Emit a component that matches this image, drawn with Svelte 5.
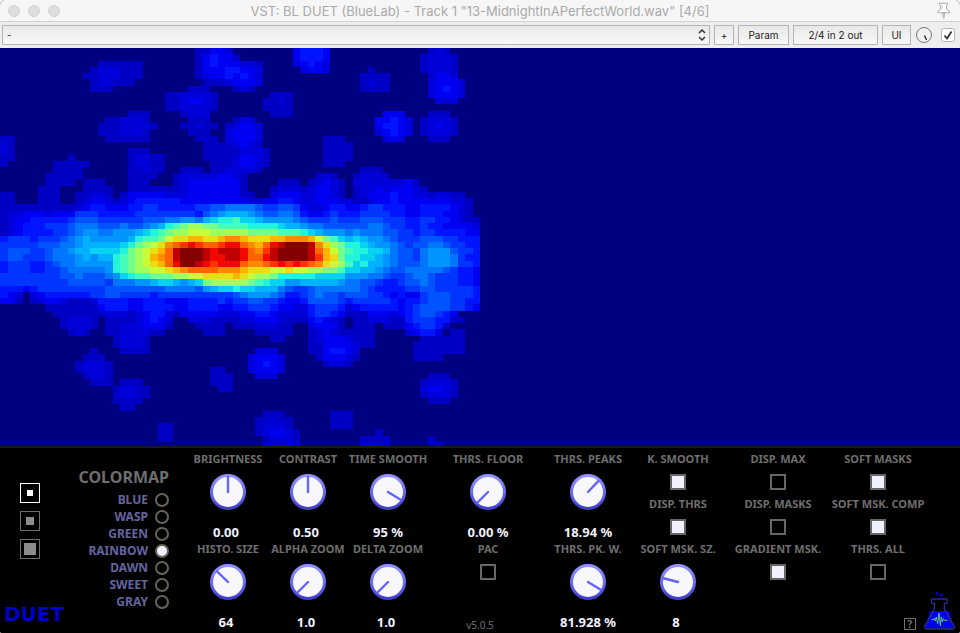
<script>
  // Colour ramp of the "rainbow" map, from quietest to loudest.
  const ramp = {
    a: '#0000c4', b: '#0000da', c: '#0000f2', d: '#0014ff', e: '#0034ff',
    f: '#0054ff', g: '#0076ff', h: '#0094ff', i: '#00b2ff', j: '#08d2f2',
    k: '#22f4dc', l: '#44ffba', m: '#74ff8c', n: '#a0ff5c', o: '#c8ff36',
    p: '#ecdc14', q: '#ffb400', r: '#ff8a00', s: '#ff6200', t: '#ff3400',
    u: '#f20800', v: '#c00000', w: '#840000'
  };

  // Histogram cells, one line per bin row: left 32 bins, right 32 bins.
  const bins = [
    ['..........................aaccb.', '.......cdddc.............aba....'],
    ['..........................acdcca', '.......cdddc............abbba...'],
    ['.............aaaaaa.......acdccc', 'bba....bcdcb............abbba...'],
    ['............abbbaaa.......acccdd', 'ccb.....bccb.....a......abbba...'],
    ['...........aabbbaaa.......abccdc', 'dcb.............aaaa.....accb...'],
    ['............abbaaa.........aaabc', 'ccb.............abaa.....bcccb..'],
    ['............aaa..........aaa...a', 'ba..............aaaa.....bcdcb..'],
    ['......................aabbbba...', '....aaa..................bcccb..'],
    ['......................aabccba...', '...aaba...................bbb...'],
    ['......................aabbbba...', '...aaaa.........................'],
    ['.................aaa....abbb....', '....aaa............ccc...aaa....'],
    ['..............aabbba.....aaa...a', 'bb................ccdcb.abbba...'],
    ['.............aaabbbba...aabaa.ab', 'ccb...............cddcb.abcba...'],
    ['.............aaabbba.....aaa..bc', 'ccb...............bcdcb.abbba...'],
    ['aa............aaaaaa......aaa.bc', 'ccb........aaa.....bcb...aaa....'],
    ['ba.........................aaaab', 'cba........aaaa.................'],
    ['ba...............aaa.......aaaaa', 'bbba.......aaaa.................'],
    ['aa.......a.......abbaa.....aaaab', 'ccba.......aaaa.................'],
    ['a......aaaaa.....abbaa......aaab', 'ccba.......aaa..................'],
    ['.......aaaa......aabaa..aaa.aabb', 'bba.............aaa.............'],
    ['......aaaaa......aaaa..abbbbbccb', 'a.........aba..abbba............'],
    ['......aaaa.aaa...aaa...abccccccc', 'a....aaa.abcba.bbbbbbbca........'],
    ['.....aaa...aaaa..aaaaaaabccccccc', 'a...abbbabccba.abbcbcccba.......'],
    ['aa...aaa..aabba.acccccbbbccccccc', 'aa..bcccbbccba.abcccdccbbabbaa..'],
    ['aa...aaa..abccbabcddddddcccccccc', 'cbbccddcbbcccbbaabccdcccccccbba.'],
    ['aaaaaaaaaabcddcccddeedddddeeffgg', 'ggfeeffecbbcddccdeedddccddddcba.'],
    ['abbcccbccceeedddddeeeeeeeedfghii', 'ihgffggfdccdedddeeeeddccdddccba.'],
    ['abccdddddefffeeeeeefffgghhgijkkl', 'jjihhhhgfeeefeeefffeeeddeeddcbaa'],
    ['abcdddeeefgggfffgffghiklmnnmmlll', 'lkkkkjiihggffffffggfeeddeddccccb'],
    ['abcddddeefghhgghhhijklmnnooonnnn', 'nmmmmlllkjihhhghgggffeedeeddddcc'],
    ['deeedeeefghihhhhhikllmoppqqppqrr', 'qpppqqrrrqomljijihhgfeeefffeeddd'],
    ['eeeeefffgghiiiiijkmnoprstutsstuu', 'srqsuvwwwvrpnmkkjihhgfeffggfeedd'],
    ['efffeefgghiijjjjkmnopqsvwwwvuvvv', 'usrtvwwwwvsqomlkkjjigffeghhhfeed'],
    ['effeeefggghihiiklmnoqrsvwwwvuuvv', 'ussuvwwwwvtqpmkkjjihgffeghhhgedd'],
    ['deeeddefgghhhhhklmnopqsuwwvutuuu', 'srrstututsrponljkiihgfffghhhgeed'],
    ['deeeddeefggggghklmnnoopqrssssrrr', 'qpppoopoonnmmljjiihgffgggggfeddc'],
    ['eeeeeeeeffgfffghjkllmmmnnooppppq', 'ponnmkkkkkjjjjhhhggfeefggfeeeddc'],
    ['eeeeeeeeefffffeggghhijjihijmnnnn', 'nmlkjjhhiiiiihggffeddeffgfeeeddc'],
    ['dddcdeeeeeeeeeffffffffggggfhijjk', 'jjiiigfeefggggggfeddddeeffeeeeed'],
    ['dcb.bcddddddeeffeeeedeeeeeeeeeef', 'ghhhgfddefgffefffeedcdccefffeeed'],
    ['cca.abccbaaabddddccdddcccddddede', 'effeedccdffffedeeeeedcddefffeedd'],
    ['......aaaaaaacdddccddddccddddccd', 'deeedccbbdeeedbcdddddcdeffffeedc'],
    ['.......aaaaaaabbbabcddbacccccbbb', 'ccddcbbbbdeedcaaacccbcdeffedc...'],
    ['........abbba.aaaabcdcb..bbbaaaa', 'bbcccbaaacdcba.aabbbaadeeeddaa..'],
    ['........abbba.aabbbccca...aaaa.a', 'aabbbaa..bccca.aaa.aaacdeeda....'],
    ['.........aba..aabbbbaa.....aaa..', '..aaaaa..abcbaaaaa....bcddb.aa..'],
    ['...............abbba............', '....aa...abcccbaaa......aaaaaa..'],
    ['...............abbba............', '.........aaccccbaa.....aaaaaaa..'],
    ['............a...aaaa............', '..bbb....aacddcb.......aaaaaaa..'],
    ['...........aaa..................', '.bcccb....acccba.......aaaa.....'],
    ['..........abbba.................', '.bcdcb.....abba.................'],
    ['..........abbba.............aa..', '.bcccb..........................'],
    ['...........abba.............aaa.', '..bbb....................aaa....'],
    ['............aaa.aaa.........aaa.', '........................abbba...'],
    ['...............abbaa.........aa.', '........................bccba...'],
    ['...............abbaa............', '........................abbba...'],
    ['...............aaaa.............', '.........................aaa....'],
    ['................aa..............', '................................'],
    ['................................', '...aaa......aaa.................'],
    ['................................', '..aabaa.....aaa.................'],
    ['.....................aa.........', '..abbba.....aaa.................'],
    ['.....................aa.........', '..abccba..........a.............'],
    ['.....................aa.........', '...abbba........aaaa.....a......'],
    ['................................', '...abbba........abba.....aa.....']
  ];

  // Merge neighbouring cells of one level into a single bar.
  const cells = bins.flatMap(([left, right], y) => {
    const line = left + right;
    return [...line.matchAll(/([a-w])\1*/g)].map((m) => ({
      x: m.index, y, w: m[0].length, fill: ramp[m[1]]
    }));
  });

  const knob = (label, turn, text, unit = '') => ({ kind: 'knob', label, turn, text, unit });
  const toggle = (label, on = false) => ({ label, on });
  const toggles = (...items) => ({ kind: 'toggles', items });

  let controls = $state([
    knob('BRIGHTNESS', 50, '0.00'),
    knob('CONTRAST', 50, '0.50'),
    knob('TIME SMOOTH', 95, '95', '%'),
    knob('THRS. FLOOR', 0, '0.00', '%'),
    knob('THRS. PEAKS', 66, '18.94', '%'),
    toggles(toggle('K. SMOOTH', true), toggle('DISP. THRS', true)),
    toggles(toggle('DISP. MAX'), toggle('DISP. MASKS')),
    toggles(toggle('SOFT MASKS', true), toggle('SOFT MSK. COMP', true)),
    knob('HISTO. SIZE', 33, '64'),
    knob('ALPHA ZOOM', 0, '1.0'),
    knob('DELTA ZOOM', 0, '1.0'),
    { ...toggles(toggle('PAC')), note: 'v5.0.5' },
    knob('THRS. PK. W.', 95, '81.928', '%'),
    knob('SOFT MSK. SZ.', 22, '8'),
    toggles(toggle('GRADIENT MSK.', true)),
    toggles(toggle('THRS. ALL'))
  ]);

  const maps = ['BLUE', 'WASP', 'GREEN', 'RAINBOW', 'DAWN', 'SWEET', 'GRAY'];
  let colormap = $state('RAINBOW');

  const sizes = [
    { name: 'Small', dot: 6 },
    { name: 'Medium', dot: 8 },
    { name: 'Large', dot: 12 }
  ];
  let size = $state('Small');
  let enabled = $state(true);
</script>

<div class="window">
  <header class="titlebar">
    <span class="lights"><i></i><i></i><i></i></span>
    <h1>VST: BL DUET (BlueLab) - Track 1 "13-MidnightInAPerfectWorld.wav" [4/6]</h1>
    <button class="pin" aria-label="Pin window">
      <svg viewBox="888 6 44 52" width="15" height="17">
        <path d="M897 10h26v4l-4 2v12l9 6v5h-35v-5l8-6V16l-4-2z M908 39h5l-1 14-1.500 3-1.500-3z" fill="#fff" stroke="#999" stroke-width="2.500" />
        <path d="M906 16v13" stroke="#bbb" stroke-width="2.500" />
      </svg>
    </button>
  </header>

  <div class="toolbar">
    <div class="preset">
      <select aria-label="Preset"><option>-</option></select>
      <svg viewBox="0 0 10 14" width="10" height="14">
        <path d="M2 5l3-3 3 3M2 9l3 3 3-3" fill="none" stroke="#333" stroke-width="1.500" />
      </svg>
    </div>
    <button class="add">+</button>
    <button class="param">Param</button>
    <button class="routing">2/4 in 2 out</button>
    <button class="ui">UI</button>
    <button class="mix" aria-label="Wet mix">
      <svg viewBox="0 0 18 18" width="18" height="18">
        <circle cx="9" cy="9" r="7.500" fill="#f1f1f1" stroke="#777" />
        <path d="M9.500 9.500l2 4.500" stroke="#222" stroke-width="1.300" />
      </svg>
    </button>
    <label class="enable">
      <input type="checkbox" bind:checked={enabled} aria-label="Enable plug-in" />
      <svg viewBox="0 0 14 14" width="14" height="14">
        <rect x=".5" y=".5" width="13" height="13" rx="2" fill="#fff" stroke="#b4b4b4" />
        {#if enabled}<path d="M3.500 7.500l2.500 3 4.500-7" fill="none" stroke="#333" stroke-width="1.800" />{/if}
      </svg>
    </label>
  </div>

  <svg class="histogram" viewBox="0 0 128 63.68" preserveAspectRatio="none" shape-rendering="crispEdges" role="img" aria-label="Histogram">
    {#each cells as c}
      <rect x={c.x} y={c.y} width={c.w} height="1" fill={c.fill} />
    {/each}
  </svg>

  <main class="panel">
    <aside class="side">
      <div class="left">
        <div class="sizes">
          {#each sizes as s}
            <button aria-label={s.name} class:active={size === s.name} onclick={() => (size = s.name)}>
              <i style:width="{s.dot}px" style:height="{s.dot}px"></i>
            </button>
          {/each}
        </div>
        <strong class="logo">DUET</strong>
      </div>
      <fieldset class="maps">
        <legend>COLORMAP</legend>
        {#each maps as m}
          <label>{m}<input type="radio" name="colormap" value={m} bind:group={colormap} /></label>
        {/each}
      </fieldset>
    </aside>

    <section class="controls">
      {#each controls as c}
        <div class="cell">
          {#if c.kind === 'knob'}
            <label class="knob">
              <span>{c.label}</span>
              <div class="dial">
                <svg viewBox="0 0 36 36" width="36" height="36">
                  <defs>
                    <linearGradient id="ring" x1="0" y1="0" x2="0" y2="1">
                      <stop offset="0" stop-color="#9696ff" />
                      <stop offset="0.500" stop-color="#6c6cf4" />
                      <stop offset="1" stop-color="#3a3acc" />
                    </linearGradient>
                  </defs>
                  <circle cx="18" cy="18" r="18" fill="url(#ring)" />
                  <circle cx="18" cy="18" r="15" fill="#f8f8fa" />
                  <path d="M18 18V3" stroke="#6464ff" stroke-width="2.400" stroke-linecap="round" transform="rotate({c.turn * 2.7 - 135} 18 18)" />
                </svg>
                <input type="range" min="0" max="100" bind:value={c.turn} />
              </div>
            </label>
            <output class:bare={!c.unit}>{c.text}{c.unit ? ` ${c.unit}` : ''}</output>
          {:else}
            {#each c.items as t}
              <label class="toggle"><span>{t.label}</span><input type="checkbox" bind:checked={t.on} /></label>
            {/each}
            {#if c.note}<small>{c.note}</small>{/if}
          {/if}
        </div>
      {/each}
      <footer class="brand">
        <button class="help">?</button>
        <svg viewBox="672 438 93 117" width="31" height="39" role="img" aria-label="BlueLab">
          <circle cx="711" cy="445" r="4" fill="#0000d8" />
          <circle cx="724" cy="451" r="5" fill="#0000d8" />
          <path d="M690 499h57l14 46q1 4-4 4h-77q-5 0-3-5z" fill="#0000f0" />
          <path d="M703 475l-6 0q-3-1-3-6 0-7 4-7h40q4 0 4 7 0 5-3 6h-6v18l29 50q3 9-5 9h-77q-8 0-5-9l28-50z" fill="none" stroke="#2c2c96" stroke-width="4" />
          <path d="M694 524h7l2-4 3 8 3-12 4 20 4-32 4 38 3-26 3 15 3-10 3 5h9" fill="none" stroke="#5cc87c" stroke-width="3" />
        </svg>
      </footer>
    </section>
  </main>
</div>

<style>
  :global(body) {
    margin: 0;
    background: #fff;
  }

  * {
    box-sizing: border-box;
  }

  button {
    padding: 0;
    border: 0;
    background: none;
    font: inherit;
    color: inherit;
  }

  .window {
    overflow: hidden;
    border-radius: 5px 5px 2px 2px;
    background: #000;
    font-family: Inter, "Liberation Sans", sans-serif;
  }

  .titlebar {
    display: grid;
    grid-template-columns: 60px 1fr 60px;
    align-items: center;
    height: 22px;
    border-bottom: 1px solid #d0d0d0;
    background: #f6f6f6;
  }

  .titlebar h1 {
    margin: 0;
    color: #aaa;
    font-size: 13px;
    font-weight: 400;
    line-height: 20px;
    text-align: center;
    white-space: nowrap;
  }

  .lights {
    display: flex;
    gap: 8px;
    padding-left: 8px;
  }

  .lights i {
    width: 12px;
    height: 12px;
    flex: none;
    border: 1px solid #d0d0d0;
    border-radius: 50%;
    background: #dedede;
  }

  .pin {
    justify-self: end;
    display: flex;
    padding-right: 9px;
  }

  .toolbar {
    display: flex;
    align-items: center;
    gap: 4px;
    height: 26px;
    padding: 0 5px 0 2px;
    background: #eee;
    color: #222;
    font-size: 10px;
  }

  .toolbar .add,
  .toolbar .param,
  .toolbar .routing,
  .toolbar .ui,
  .preset select {
    height: 20px;
    border: 1px solid #b4b4b4;
    border-radius: 0;
    background: linear-gradient(#e8e8e8, #f8f8f8);
  }

  .toolbar button {
    flex: none;
  }

  .add {
    width: 20px;
  }

  .param {
    width: 51px;
  }

  .routing {
    width: 85px;
  }

  .ui {
    width: 29px;
  }

  .mix {
    display: flex;
  }

  .preset {
    position: relative;
    flex: 1;
    display: flex;
  }

  .preset select {
    width: 100%;
    padding: 0 4px;
    appearance: none;
    color: #333;
    font: inherit;
  }

  .preset svg {
    position: absolute;
    right: 3px;
    top: 3px;
    pointer-events: none;
  }

  .enable {
    position: relative;
    display: flex;
    margin-left: 4px;
  }

  .enable input,
  .dial input {
    position: absolute;
    inset: 0;
    width: 100%;
    height: 100%;
    margin: 0;
    opacity: 0;
  }

  .histogram {
    display: block;
    width: 100%;
    height: 398px;
    background: #000080;
  }

  .panel {
    display: grid;
    grid-template-columns: 188px 1fr;
    min-height: 187px;
    border-top: 2px solid #1a1a1a;
    background: #000;
    color: #6e6e6e;
    font: 700 11px/14px "Noto Sans", "Open Sans", sans-serif;
  }

  .side {
    display: flex;
    justify-content: space-between;
    padding: 0 19px 0 4px;
  }

  .left {
    display: flex;
    flex-direction: column;
    justify-content: space-between;
    padding: 35px 0 9px;
  }

  .sizes {
    display: flex;
    flex-direction: column;
    gap: 8px;
    padding-left: 16px;
  }

  .sizes button {
    display: grid;
    place-items: center;
    width: 20px;
    height: 20px;
    border: 1px solid #6e6e6e;
  }

  .sizes i {
    background: #8c8c8c;
  }

  .sizes .active {
    border-color: #fff;
  }

  .sizes .active i {
    background: #fff;
  }

  .logo {
    color: #0000c8;
    font: 700 20px/20px "DejaVu Sans", sans-serif;
  }

  .maps {
    display: flex;
    flex-direction: column;
    align-items: flex-end;
    min-width: 0;
    margin: 0;
    padding: 0;
    border: 0;
  }

  .maps legend {
    padding: 19px 0 4px;
    font-size: 16px;
    line-height: 20px;
  }

  .maps label {
    display: flex;
    align-items: center;
    gap: 7px;
    height: 17px;
    color: #6464a0;
    font-size: 12px;
  }

  .maps input {
    width: 14px;
    height: 14px;
    margin: 0;
    appearance: none;
    border: 2px solid #66645a;
    border-radius: 50%;
  }

  .maps input:checked {
    background: #f0f0ff;
  }

  .controls {
    display: grid;
    grid-template-columns:
      repeat(3, minmax(0, 80fr)) minmax(0, 120fr) minmax(0, 80fr)
      repeat(3, minmax(0, 100fr)) minmax(0, 32fr);
    grid-template-rows: 90px 1fr;
    padding-top: 4px;
  }

  .cell {
    display: flex;
    flex-direction: column;
    align-items: center;
    white-space: nowrap;
  }

  .cell:nth-child(8n + 1) {
    grid-column: 1;
  }

  .cell:nth-child(16) {
    grid-area: 2 / 8;
  }

  .knob,
  .toggle {
    display: flex;
    flex-direction: column;
    align-items: center;
    gap: 8px;
  }

  .dial {
    position: relative;
    display: flex;
  }

  output {
    padding-top: 14px;
    color: #f0f0ff;
    font-size: 13px;
    line-height: 16px;
  }

  .bare {
    padding-right: 4px;
  }

  .toggle {
    height: 46px;
  }

  .toggle input {
    width: 16px;
    height: 16px;
    margin: 0;
    appearance: none;
    border: 2px solid #666;
  }

  .toggle input:checked {
    background: #f0f0ff;
  }

  small {
    margin-top: 30px;
    padding-right: 16px;
    font-size: 10px;
    font-weight: 400;
  }

  .brand {
    grid-area: 2 / 8 / 3 / 10;
    display: flex;
    align-items: flex-end;
    gap: 8px;
    align-self: end;
    justify-self: end;
    padding: 0 5px 3px 0;
  }

  .help {
    width: 12px;
    height: 12px;
    border: 1px solid #6e6e6e;
    font-size: 10px;
    line-height: 10px;
  }
</style>
